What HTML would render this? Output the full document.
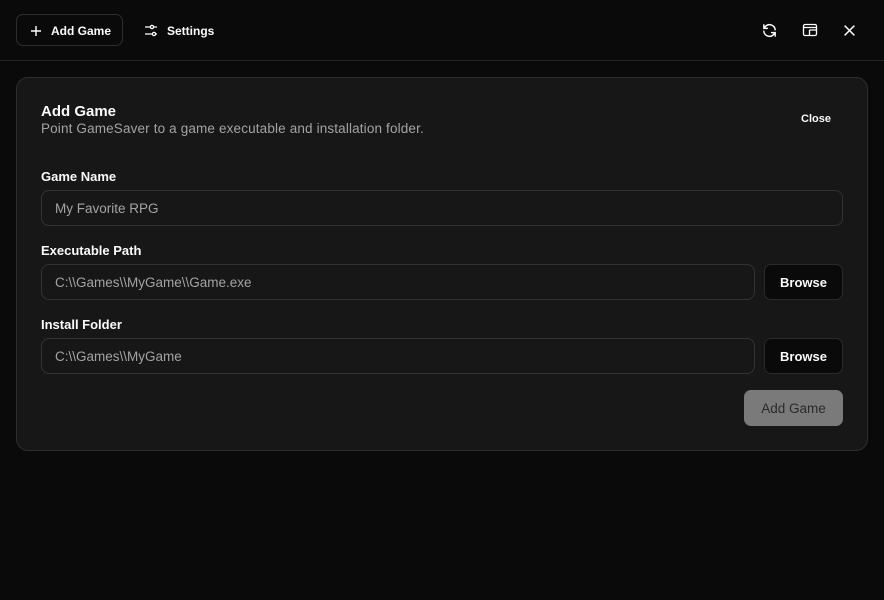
<!DOCTYPE html>
<html><head><style>
*{box-sizing:border-box;margin:0;padding:0}
body{width:884px;height:600px;background:#0a0a0a;font-family:"Liberation Sans",sans-serif;color:#fafafa;position:relative;overflow:hidden}
.top{position:absolute;left:0;top:0;width:884px;height:61px;border-bottom:1px solid #262626}
.btn1{position:absolute;left:16px;top:14px;width:107px;height:32px;border:1px solid #2e2e2e;border-radius:7px;font-size:12px;font-weight:bold;display:flex;align-items:center;padding-left:13px;gap:9px;padding-top:2px}
.set{position:absolute;left:143px;top:23px;font-size:12px;font-weight:bold;display:flex;align-items:center;gap:8px}
.ic{position:absolute;top:21px}
.card{position:absolute;left:16px;top:77px;width:852px;height:374px;background:#171717;border:1px solid #2e2e2e;border-radius:12px}
.h{position:absolute;left:24px;top:25px;font-size:15px;font-weight:bold}
.sub{position:absolute;left:24px;top:43px;font-size:13.5px;letter-spacing:0.15px;color:#a3a3a3}
.close{position:absolute;right:36px;top:35px;font-size:11px;font-weight:bold}
.lbl{position:absolute;left:24px;font-size:13px;font-weight:bold}
.inp{position:absolute;left:24px;height:36px;border:1px solid #333;border-radius:8px;font-size:13.5px;color:#a3a3a3;padding-left:13px;line-height:36px}
.br{position:absolute;left:747px;width:79px;height:36px;background:#0a0a0a;border:1px solid #2a2a2a;border-radius:7px;font-size:13px;font-weight:bold;text-align:center;line-height:35px}
.add{position:absolute;left:727px;top:312px;width:99px;height:36px;background:#7a7a7a;border-radius:7px;color:#2a2a2a;font-size:13.5px;text-align:center;line-height:37px}
</style></head><body>
<div class="top">
 <div class="btn1"><svg width="12" height="12" viewBox="0 0 12 12"><path d="M6 1v10M1 6h10" stroke="#fff" stroke-width="1.4"/></svg>Add Game</div>
 <div class="set"><svg width="16" height="16" viewBox="0 0 16 16" fill="none" stroke="#fff" stroke-width="1.3"><path d="M2 4h5M11 4h3M2 11h7M13 11h1"/><circle cx="9" cy="4" r="1.6"/><circle cx="11" cy="11" r="1.6"/></svg>Settings</div>
 <svg class="ic" style="left:761px;top:22px" width="17" height="17" viewBox="0 0 24 24" fill="none" stroke="#fff" stroke-width="2" stroke-linecap="round"><path d="M20 11a8 8 0 0 0-14-4.5L4 9M4 4v5h5M4 13a8 8 0 0 0 14 4.5l2-2.5M20 20v-5h-5"/></svg>
 <svg class="ic" style="left:802px;top:22px" width="16" height="16" viewBox="0 0 16 16" fill="none" stroke="#fff" stroke-width="1.3"><rect x="1.5" y="2.5" width="13" height="11" rx="1.5"/><path d="M1.5 5.5h13M7.5 8v5.5M7.5 8h7"/></svg>
 <svg class="ic" style="left:843px;top:24px" width="13" height="13" viewBox="0 0 12 12"><path d="M1.5 1.5l9 9M10.5 1.5l-9 9" stroke="#fff" stroke-width="1.4"/></svg>
</div>
<div class="card">
 <div class="h">Add Game</div>
 <div class="sub">Point GameSaver to a game executable and installation folder.</div>
 <div class="close">Close</div>
 <div class="lbl" style="top:91px">Game Name</div>
 <div class="inp" style="top:112px;width:802px">My Favorite RPG</div>
 <div class="lbl" style="top:165px">Executable Path</div>
 <div class="inp" style="top:186px;width:714px">C:\\Games\\MyGame\\Game.exe</div>
 <div class="br" style="top:186px">Browse</div>
 <div class="lbl" style="top:239px">Install Folder</div>
 <div class="inp" style="top:260px;width:714px">C:\\Games\\MyGame</div>
 <div class="br" style="top:260px">Browse</div>
 <div class="add">Add Game</div>
</div>
</body></html>
